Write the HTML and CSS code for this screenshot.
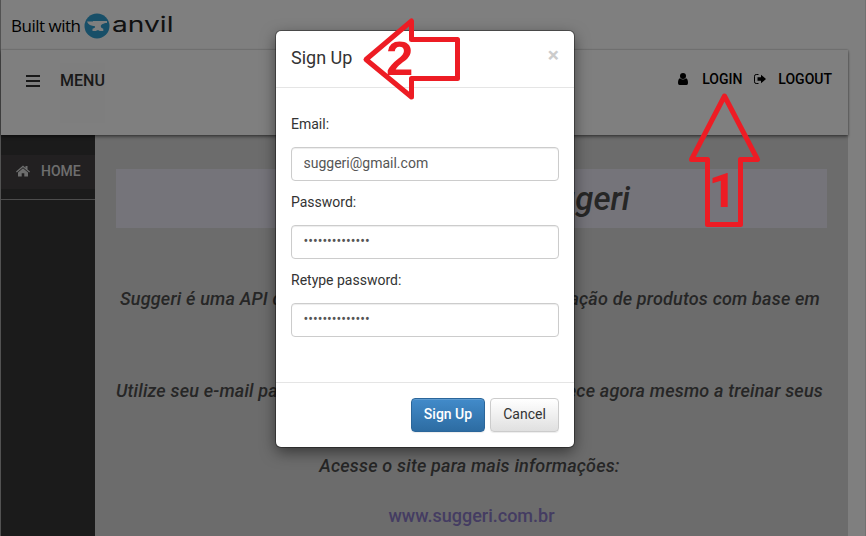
FILE: index.html
```html
<!DOCTYPE html>
<html lang="pt">
<head>
<meta charset="utf-8">
<title>Suggeri</title>
<link rel="stylesheet" href="styles.css">
</head>
<body>
<div class="page">
  <div class="banner">
    <span class="built">Built with</span>
    <svg class="logo" viewBox="0 0 26 26"><circle cx="13" cy="13" r="12.5" fill="#309fd0"/><path fill="#fff" d="M3 8.500H9V8h14v2c-3.500.2-6.200 1.500-6.200 3.200 0 1.300.9 2 2.500 2.500V18h-3.600c-.5-1.100-3.200-1.100-3.700 0H8.500v-2.300c2-.4 2.800-1.200 2.500-2.500C7 13 4 11.500 3 8.500z"/></svg>
    <span class="wordmark"><span class="wordmark-text">anvil</span></span>
  </div>
  <header class="topbar">
    <svg class="burger" viewBox="0 0 14 12"><path d="M0 1h14M0 6h14M0 11h14" stroke="#333" stroke-width="2"/></svg>
    <div class="menu">MENU</div>
    <nav class="account">
      <svg class="user" viewBox="0 0 10 12"><circle cx="5" cy="3" r="3"/><path d="M2 5.200Q5 8 8 5.200Q10 6 10 10Q10 12 8.500 12H1.500Q0 12 0 10Q0 6 2 5.200z"/></svg>
      <span class="login">LOGIN</span>
      <svg class="exit" viewBox="0 0 12 10"><path d="M4.500.500H2.200Q.5.500.5 2.200V7.800Q.5 9.500 2.200 9.500H4.500" fill="none" stroke="#000"/><path d="M3.500 3.200H7V.700L12 5 7 9.300V6.800H3.500z"/></svg>
      <span class="logout">LOGOUT</span>
    </nav>
  </header>
  <div class="columns">
    <aside class="sidebar">
      <div class="home">
        <svg class="house" viewBox="0 0 14 12"><path fill="#ddd" d="M7 .5L9.500 2.700V1H11.500V4.400L14 6.600 13.200 7.500 7 2.200.8 7.500 0 6.600z"/><path fill="#ddd" d="M7 3.200L12 7.400V11.500H8.300V8.200H5.700V11.500H2V7.400z"/></svg>
        <span>HOME</span>
      </div>
    </aside>
    <main class="content">
      <h1 class="title">API Suggeri</h1>
      <p class="line line-api"><span>Suggeri é uma API de</span><span>recomendação de produtos com base em</span></p>
      <p class="line line-mail"><span>Utilize seu e-mail para</span><span>comece agora mesmo a treinar seus</span></p>
      <p class="line line-site">Acesse o site para mais informações:</p>
      <p class="link">www.suggeri.com.br</p>
    </main>
  </div>
</div>
<div class="backdrop">
  <div class="modal">
    <div class="modal-head"><span>Sign Up</span><span class="close">×</span></div>
    <div class="modal-body">
      <label class="label" for="email">Email:</label>
      <input class="field" id="email" type="text" value="suggeri@gmail.com">
      <label class="label" for="pw">Password:</label>
      <div class="field" id="pw">••••••••••••••</div>
      <label class="label" for="pw2">Retype password:</label>
      <div class="field" id="pw2">••••••••••••••</div>
    </div>
    <div class="modal-foot">
      <button class="btn primary">Sign Up</button>
      <button class="btn">Cancel</button>
    </div>
  </div>
</div>
<svg class="notes" viewBox="0 0 866 536">
  <g fill="none" stroke="#ed1c24" stroke-width="5" stroke-linejoin="round">
    <path d="M366 59.500L411.500 21V39.500H457.500V78.500H411.500V97z"/>
    <path d="M724.500 96L757.500 159.500H740.500V224.500H707.500V159.500H691.500z"/>
  </g>
  <text class="two" x="386" y="75">2</text>
  <text class="one" x="708.500" y="207">1</text>
</svg>
</body>
</html>
```
FILE: styles.css
```css
* { box-sizing: border-box; }
body {
  margin: 0;
  width: 866px;
  height: 536px;
  overflow: hidden;
  font: 14px/20px Roboto, sans-serif;
  color: #333;
  background: #fff;
}
.page {
  height: 536px;
  display: flex;
  flex-direction: column;
  padding-right: 17px;
  border-left: 1px solid #a5a5a5;
  border-right: 1px solid #e2e2e2;
}
.banner {
  height: 50px;
  flex: none;
  display: flex;
  align-items: center;
  padding: 2px 0 0 10px;
  color: #000;
}
.built { font: 17px/24px "Open Sans", sans-serif; width: 73px; white-space: nowrap; letter-spacing: -0.5px; }
.logo { width: 26px; height: 26px; }
.wordmark { width: 60px; margin-left: 2px; }
.wordmark-text {
  display: inline-block;
  font: 400 21px/24px Inter, sans-serif;
  transform: scaleX(1.34);
  transform-origin: left;
  color: #222;
  margin-top: -3px;
}
.topbar {
  position: relative;
  height: 85px;
  flex: none;
  display: flex;
  background: #fff;
  box-shadow: 0 0 2px rgba(0,0,0,.35), 0 2px 3px rgba(0,0,0,.4);
}
.burger { width: 14px; height: 12px; margin: 25px 0 0 25px; }
.menu {
  width: 45px;
  height: 60px;
  margin: 13px 0 0 20px;
  padding-top: 8px;
  background: #fcfcfc;
  font-size: 16px;
  font-weight: 500;
}
.account {
  display: flex;
  align-items: center;
  height: 20px;
  margin: 19px 16px 0 auto;
  font-weight: 500;
  color: #000;
}
.user { width: 10px; height: 12px; }
.login { margin-left: 14px; }
.exit { width: 12px; height: 10px; margin-left: 12px; }
.logout { margin-left: 12px; }
.columns { flex: 1; min-height: 0; display: flex; }
.sidebar { width: 94px; background: #363636; flex: none; padding-top: 20px; }
.sidebar::after { content: ""; display: block; height: 1px; margin-top: 10px; background: #999; }
.home {
  height: 34px;
  display: flex;
  align-items: center;
  gap: 11px;
  padding: 0 0 2px 15px;
  background: #444143;
  color: #ddd;
  font-weight: 500;
}
.house { width: 14px; height: 12px; }
.content {
  flex: 1;
  background: #d8d8d8;
  padding: 34px 21px 0;
  color: #4d4d4d;
  font-weight: 500;
}
.title {
  height: 59px;
  margin: 0;
  padding-right: 197px;
  background: #eae8f4;
  text-align: right;
  font: italic 500 33px/59px Roboto, sans-serif;
}
.line { margin: 0; font-size: 18px; line-height: 26px; font-style: italic; white-space: nowrap; letter-spacing: .19px; }
.line-api { margin-top: 58px; display: flex; justify-content: space-between; padding: 0 7px 0 4px; }
.line-mail { margin-top: 66px; display: flex; justify-content: space-between; padding: 0 4px 0 0; }
.line-site { margin-top: 49px; text-align: center; padding-right: 4px; }
.link { margin: 24px 0 0; font-size: 18px; line-height: 26px; text-align: center; color: #8878c4; }
.backdrop {
  position: absolute;
  inset: 0;
  padding-top: 31px;
  background: rgba(0,0,0,.5);
}
.modal {
  width: 298px;
  height: 416px;
  margin-left: 276px;
  background: #fff;
  border-radius: 5px;
  box-shadow: 0 0 0 1px rgba(0,0,0,.35), 0 5px 15px rgba(0,0,0,.5);
  display: flex;
  flex-direction: column;
}
.modal-head {
  height: 57px;
  display: flex;
  justify-content: space-between;
  padding: 17px 15px 0;
  border-bottom: 1px solid #e5e5e5;
  font-size: 18px;
}
.close { font: bold 21px/21px Roboto, sans-serif; color: #ccc; margin-top: -3px; }
.modal-body { flex: 1; padding: 21px 15px 0; }
.label { display: block; height: 38px; padding-top: 5px; }
.field {
  display: block;
  width: 268px;
  height: 34px;
  margin: 0 0 6px;
  padding: 5px 12px 7px 11.5px;
  border: 1px solid #ccc;
  border-radius: 4px;
  background: #fff;
  box-shadow: inset 0 1px 1px rgba(0,0,0,.075);
  font: 14px/20px Roboto, sans-serif;
  color: #555;
}
.modal-foot {
  height: 65px;
  display: flex;
  justify-content: flex-end;
  gap: 5px;
  padding: 15px;
  border-top: 1px solid #e5e5e5;
}
.btn {
  width: 69px;
  height: 34px;
  padding: 0 0 2px;
  border: 1px solid #ccc;
  border-radius: 4px;
  background: linear-gradient(#fff, #e0e0e0);
  box-shadow: inset 0 1px 0 rgba(255,255,255,.15), 0 1px 1px rgba(0,0,0,.075);
  font: 14px/20px Roboto, sans-serif;
  color: #333;
}
.primary {
  width: 74px;
  border-color: #2b669a;
  background: linear-gradient(#428bca, #2d6ca2);
  font-weight: 500;
  color: #fff;
}
.notes { position: absolute; left: 0; top: 0; width: 866px; height: 536px; }
.notes text { fill: #ed1c24; }
.two { font: bold 49px "Liberation Sans", sans-serif; }
.one { font: bold 49px Roboto, sans-serif; }
```
